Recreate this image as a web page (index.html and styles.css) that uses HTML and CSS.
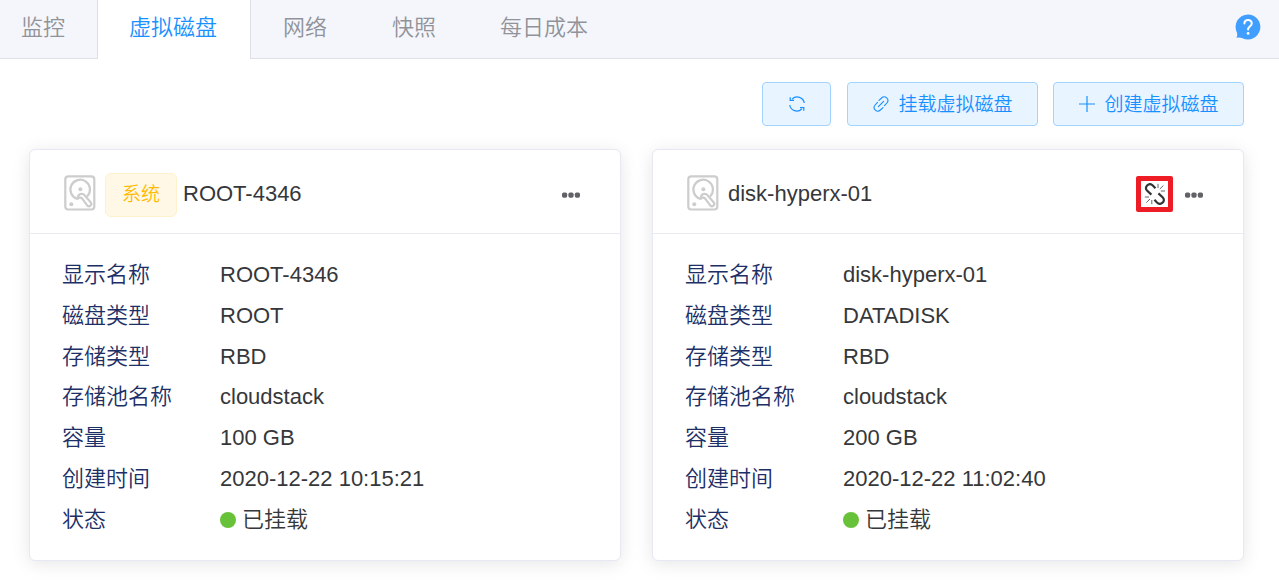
FILE: index.html
```
<!DOCTYPE html>
<html lang="zh-CN">
<head>
<meta charset="utf-8">
<title>虚拟磁盘</title>
<link rel="stylesheet" href="styles.css">
</head>
<body>
<svg class="defs" width="0" height="0">
  <symbol id="disk" viewBox="0 0 32 36">
    <g fill="none" stroke="#cdcdcd" stroke-width="2.2" stroke-linejoin="round" stroke-linecap="round">
      <rect x="1.3" y="1.3" width="29" height="33.2" rx="3"/>
      <path d="M13 23.8A9.8 9.8 0 1 1 23.6 20.9"/>
      <path d="M13.8 23.6C13.6 18.6 18.6 17.4 20.8 20.6L26.8 27.4C28.5 29.7 25.3 32.6 23.2 30.4L18.2 23.6Q16 21.6 13.8 23.6Z"/>
    </g>
    <circle cx="16.4" cy="14.3" r="2" fill="#cdcdcd"/>
    <circle cx="7.3" cy="29.2" r="2" fill="#cdcdcd"/>
  </symbol>
  <symbol id="dots" viewBox="0 0 18 6">
    <g fill="#606266"><rect x="0" y=".5" width="5.2" height="5.2" rx="1.7"/><rect x="6.4" y=".5" width="5.2" height="5.2" rx="1.7"/><rect x="12.8" y=".5" width="5.2" height="5.2" rx="1.7"/></g>
  </symbol>
</svg>
<nav class="tabs">
  <div class="tab first">监控</div>
  <div class="tab active">虚拟磁盘</div>
  <div class="tab">网络</div>
  <div class="tab">快照</div>
  <div class="tab last">每日成本</div>
  <svg class="help" width="26" height="26" viewBox="0 0 26 26">
    <path d="M13 .4A12.5 12.5 0 1 1 7.5 24.2Q4.5 23.2 1.4 23.8Q2.8 21.6 1.9 18.5A12.5 12.5 0 0 1 13 .4Z" fill="#409eff"/>
    <path d="M9.4 9.6C9.4 4.8 16.8 4.9 16.8 9.4C16.8 12.2 13.1 12.4 13.1 15.6" fill="none" stroke="#fff" stroke-width="2" stroke-linecap="round"/>
    <circle cx="13.1" cy="19.4" r="1.4" fill="#fff"/>
  </svg>
</nav>
<div class="toolbar">
  <button class="btn refresh"><svg width="16" height="16" viewBox="0 0 16 16" fill="none" stroke="#1890ff" stroke-width="1.2"><path d="M.7 9A7.2 7.2 0 0 0 12.8 13M15.3 7A7.2 7.2 0 0 0 3.2 3M1.2 1.3V4.4H5M14.8 14.7V11.6H11"/></svg></button>
  <button class="btn attach"><svg width="16" height="16" viewBox="0 0 16 16" fill="none" stroke="#1890ff" stroke-width="1.1" stroke-linecap="round"><path d="M6 4.4L8.6 2C12 -1.2 17 3.4 13.9 7L11.5 9.6M10 11.6L7.4 14C4 17.2 -1 12.6 2.1 9L4.5 6.4M5.4 10.6L10.6 5.4"/></svg><span>挂载虚拟磁盘</span></button>
  <button class="btn create"><svg width="16" height="16" viewBox="0 0 16 16" stroke="#1890ff" stroke-width="1.2"><path d="M0 8H16M8 0V16"/></svg><span>创建虚拟磁盘</span></button>
</div>
<main class="cards">
  <section class="card">
    <header class="head">
      <svg class="disk" width="32" height="36"><use href="#disk"/></svg>
      <span class="tag">系统</span><span class="name">ROOT-4346</span>
      <span class="actions"><svg class="more" width="18" height="6"><use href="#dots"/></svg></span>
    </header>
    <dl class="info">
      <dt>显示名称</dt><dd>ROOT-4346</dd>
      <dt>磁盘类型</dt><dd>ROOT</dd>
      <dt>存储类型</dt><dd>RBD</dd>
      <dt>存储池名称</dt><dd>cloudstack</dd>
      <dt>容量</dt><dd>100 GB</dd>
      <dt>创建时间</dt><dd>2020-12-22 10:15:21</dd>
      <dt>状态</dt><dd class="status"><i class="dot"></i>已挂载</dd>
    </dl>
  </section>
  <section class="card">
    <header class="head">
      <svg class="disk" width="32" height="36"><use href="#disk"/></svg>
      <span class="name">disk-hyperx-01</span>
      <span class="actions">
        <span class="detach"><svg width="22" height="22" viewBox="0 0 22 22" fill="none" stroke="#333"><path d="M7.4 11.6L3 7.5C-.4 3.8 5.2 -1 8.8 2.5L11.4 5.2M14.4 10.4L18.8 14.5C22.2 18.2 16.6 23 13 19.5L10.4 16.8" stroke-width="2.2"/><path d="M14 5V.8M15.8 6L19.4 2.5M16.8 8H21M7.8 17V21.2M6 16L2.4 19.5M5 14H.8" stroke-width="1" stroke="#666"/></svg></span>
        <svg class="more" width="18" height="6"><use href="#dots"/></svg>
      </span>
    </header>
    <dl class="info">
      <dt>显示名称</dt><dd>disk-hyperx-01</dd>
      <dt>磁盘类型</dt><dd>DATADISK</dd>
      <dt>存储类型</dt><dd>RBD</dd>
      <dt>存储池名称</dt><dd>cloudstack</dd>
      <dt>容量</dt><dd>200 GB</dd>
      <dt>创建时间</dt><dd>2020-12-22 11:02:40</dd>
      <dt>状态</dt><dd class="status"><i class="dot"></i>已挂载</dd>
    </dl>
  </section>
</main>
</body>
</html>
```
FILE: styles.css
```
* { box-sizing: border-box; }
body {
  margin: 0;
  height: 584px;
  overflow: hidden;
  background: #fff;
  color: #36373a;
  font: 350 22px/1 "Liberation Sans", "Noto Sans CJK SC", sans-serif;
  white-space: nowrap;
}
svg { display: block; flex: none; }
.defs { position: absolute; }
.tabs {
  display: flex;
  height: 59px;
  background: #f5f6fb;
  border-bottom: 1px solid #dfe1e9;
}
.tab {
  height: 59px;
  padding: 0 32px;
  line-height: 56px;
  color: #909399;
  border-right: 1px solid transparent;
}
.tab.first { width: 98px; padding-left: 21px; border-right-color: #dcdfe6; }
.tab.active { width: 153px; padding-left: 31px; background: #fff; color: #1890ff; border-right-color: #dcdfe6; }
.tab.last { padding-left: 31px; }
.help { margin: 14px 18px 0 auto; }
.toolbar {
  display: flex;
  justify-content: flex-end;
  padding: 23px 35px 0 0;
}
.btn {
  display: flex;
  align-items: center;
  justify-content: center;
  height: 44px;
  padding: 0;
  border: 1px solid #a3d3ff;
  border-radius: 4px;
  background: #e8f4ff;
  color: #1890ff;
  font: 350 19px/40px "Liberation Sans", "Noto Sans CJK SC", sans-serif;
  gap: 9px;
}
.btn span { padding-top: 2px; }
.refresh { width: 69px; }
.attach { width: 191px; margin-left: 16px; }
.create { width: 191px; margin-left: 15px; padding-left: 1px; }
.attach { padding-left: 1px; }
.cards { display: flex; gap: 31px; padding: 23px 0 0 29px; }
.card {
  width: 592px;
  height: 412px;
  border: 1px solid #e6e8f4;
  border-radius: 6px;
  background: #fff;
  box-shadow: 0 3px 18px rgba(0, 0, 0, .1);
}
.head {
  display: flex;
  align-items: center;
  height: 84px;
  padding: 4px 40px 0 34px;
  border-bottom: 1px solid #e9eaf3;
}
.disk { margin: 0 9px 2px 0; }
.tag {
  width: 72px;
  height: 44px;
  margin: 2px 6px 0 0;
  border: 1px solid #fff1cc;
  border-radius: 6px;
  background: #fff8e6;
  color: #ffba00;
  font-size: 19px;
  line-height: 41px;
  text-align: center;
}
.actions { display: flex; align-items: center; margin-left: auto; gap: 12px; }
.more { margin-top: 2px; }
.detach {
  display: flex;
  align-items: center;
  justify-content: center;
  width: 37px;
  height: 36px;
  border: 5px solid #ee1c25;
  border-radius: 2px;
}
.info {
  display: grid;
  grid-template-columns: 158px 1fr;
  grid-auto-rows: 40.8px;
  margin: 0;
  padding: 20px 32px;
  line-height: 41px;
}
dt { color: #1c2f66; }
dd { margin: 0; }
.status { display: flex; align-items: center; gap: 6px; }
.dot { width: 16px; height: 16px; margin-top: 1px; border-radius: 50%; background: #67c23a; }
```
